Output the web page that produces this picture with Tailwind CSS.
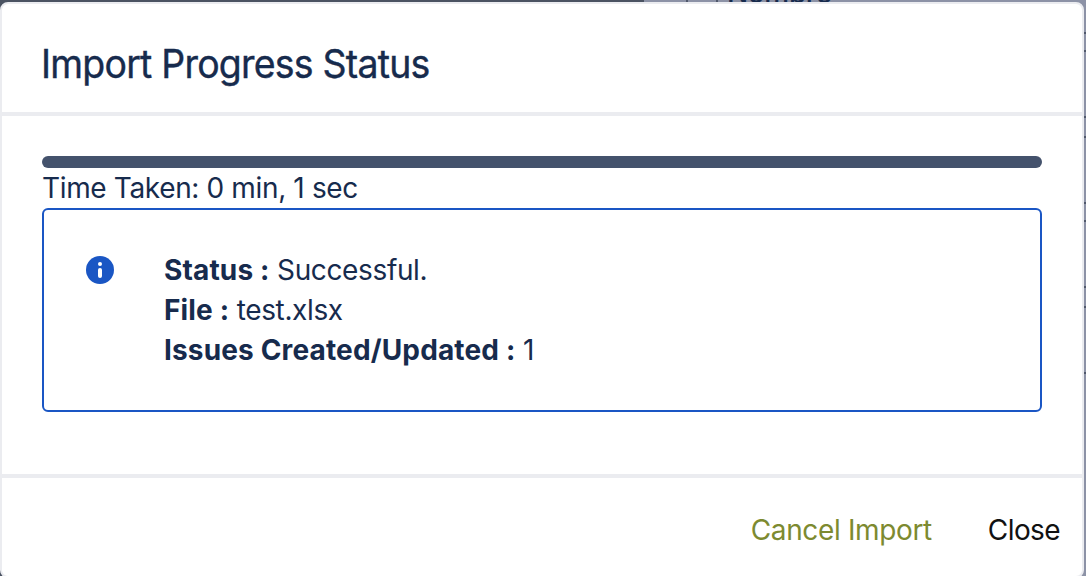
<!DOCTYPE html>
<html lang="en">
<head>
  <meta charset="UTF-8" />
  <meta name="viewport" content="width=device-width, initial-scale=1.0" />
  <title>Import Progress Status</title>
  <script src="https://cdn.jsdelivr.net/npm/@tailwindcss/browser@4"></script>
</head>
<body class="relative h-screen overflow-hidden bg-[#8c92a6] font-['Inter',sans-serif] text-[28px] leading-10 tracking-[-0.36px] text-[#172b4d]">
  <!-- Dimmed page behind the dialog -->
  <div class="absolute left-0 top-0 h-full w-[644px] bg-[#4b5362]"></div>
  <div class="absolute left-[686px] top-0 h-5 w-[32px] border-x-2 border-[#50586b]"></div>
  <div class="absolute -top-[27px] left-[727px] font-medium">Nombre</div>
  <div class="absolute right-0 top-8 h-5 w-8 border-y-2 border-[#50586b]"></div>
  <div class="absolute right-0 top-[116px] h-[22px] w-8 border-y-2 border-[#50586b]"></div>
  <div class="absolute right-0 top-[202px] h-5 w-8 border-y-2 border-[#50586b]"></div>
  <div class="absolute right-0 top-[286px] h-[22px] w-8 border-y-2 border-[#50586b]"></div>
  <div class="absolute right-0 top-[372px] h-5 w-8 border-t-2 border-[#50586b]"></div>

  <!-- Dialog -->
  <div class="relative mt-0.5 flex h-[576px] w-[1084px] flex-col rounded-lg border-2 border-[#ebecf0] bg-white">
    <div class="flex h-28 items-center border-b-4 border-[#ebecf0] px-[39px] pt-3">
      <h2 class="origin-left scale-x-[0.96] text-[39px] tracking-[-0.8px] [-webkit-text-stroke:0.4px]">Import Progress Status</h2>
    </div>

    <div class="flex-1 px-10 pt-10">
      <div class="h-3 rounded-full bg-[#44526c]"></div>
      <p>Time Taken: 0 min, 1 sec</p>
      <div class="flex h-[204px] rounded-md border-2 border-[#1a56c4] px-[42px] pt-10">
        <svg xmlns="http://www.w3.org/2000/svg" class="mt-1.5 h-7 w-7" viewBox="0 0 28 28">
          <circle cx="14" cy="14" r="14" fill="#1a56c4" />
          <circle cx="14" cy="8" r="2" fill="#fff" />
          <rect x="12" y="12" width="4" height="10" rx="2" fill="#fff" />
        </svg>
        <div class="ml-[50px]">
          <p><b class="tracking-[0.15px]">Status :</b> Successful.</p>
          <p><b class="tracking-[0.15px]">File :</b> test.xlsx</p>
          <p><b class="tracking-[0.15px]">Issues Created/Updated :</b> 1</p>
        </div>
      </div>
    </div>

    <div class="flex h-[102px] items-center justify-end gap-14 border-t-4 border-[#ebecf0] pr-[22px] pt-[5px]">
      <button class="text-[#7d8a30]">Cancel Import</button>
      <button class="tracking-[-0.6px] text-[#111]">Close</button>
    </div>
  </div>
</body>
</html>
